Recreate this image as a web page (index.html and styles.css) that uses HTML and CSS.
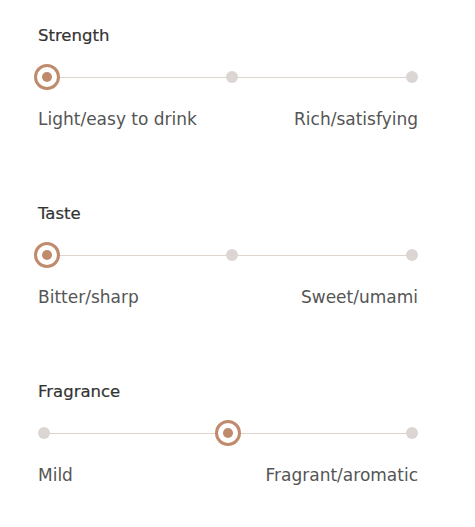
FILE: index.html
```html
<!DOCTYPE html>
<html>
<head>
<meta charset="utf-8">
<link rel="stylesheet" href="styles.css">
</head>
<body>
<div class="panel">
  <section class="scale">
    <h3 class="title">Strength</h3>
    <div class="track">
      <div class="dots"><span class="dot"></span><span></span><span class="dot"></span><span></span><span class="dot"></span></div>
      <span class="thumb" style="--p: 0"></span>
    </div>
    <div class="labels"><span>Light/easy to drink</span><span>Rich/satisfying</span></div>
  </section>
  <section class="scale">
    <h3 class="title">Taste</h3>
    <div class="track">
      <div class="dots"><span class="dot"></span><span></span><span class="dot"></span><span></span><span class="dot"></span></div>
      <span class="thumb" style="--p: 0"></span>
    </div>
    <div class="labels"><span>Bitter/sharp</span><span>Sweet/umami</span></div>
  </section>
  <section class="scale">
    <h3 class="title">Fragrance</h3>
    <div class="track">
      <div class="dots"><span class="dot"></span><span></span><span class="dot"></span><span></span><span class="dot"></span></div>
      <span class="thumb" style="--p: 0.5"></span>
    </div>
    <div class="labels"><span>Mild</span><span>Fragrant/aromatic</span></div>
  </section>
</div>
</body>
</html>
```
FILE: styles.css
```css
html, body {
  margin: 0;
  padding: 0;
  background: #ffffff;
}
body {
  font-family: "DejaVu Sans", sans-serif;
  color: #555555;
}
.panel {
  width: 380px;
  padding: 26px 0 0 38px;
  display: flex;
  flex-direction: column;
  gap: 75px;
}
.scale {
  display: flex;
  flex-direction: column;
}
.title {
  margin: 0;
  font-size: 16.5px;
  font-weight: 400;
  line-height: 20px;
  color: #333333;
  -webkit-text-stroke: 0.2px #333333;
}
.track {
  position: relative;
  height: 26px;
  margin-top: 18px;
}
.dots {
  position: absolute;
  left: 0;
  right: 0;
  top: 7px;
  display: grid;
  grid-template-columns: 12px 176fr 12px 168fr 12px;
}
.dots::before {
  content: "";
  position: absolute;
  left: 6px;
  right: 6px;
  top: 6px;
  height: 1px;
  background: #ddd4cb;
}
.dot {
  position: relative;
  width: 12px;
  height: 12px;
  border-radius: 50%;
  background: #dbd6d3;
}
.thumb {
  position: absolute;
  top: 0;
  left: calc(var(--p) * (100% - 18px) - 4px);
  width: 26px;
  height: 26px;
  box-sizing: border-box;
  border: 3px solid #c08b6d;
  border-radius: 50%;
  background: #fff;
}
.thumb::after {
  content: "";
  position: absolute;
  left: 50%;
  top: 50%;
  width: 10px;
  height: 10px;
  margin: -5px 0 0 -5px;
  border-radius: 50%;
  background: #c08b6d;
}
.labels {
  margin-top: 19px;
  display: flex;
  justify-content: space-between;
  font-size: 17px;
  font-weight: 400;
  line-height: 20px;
}
```
